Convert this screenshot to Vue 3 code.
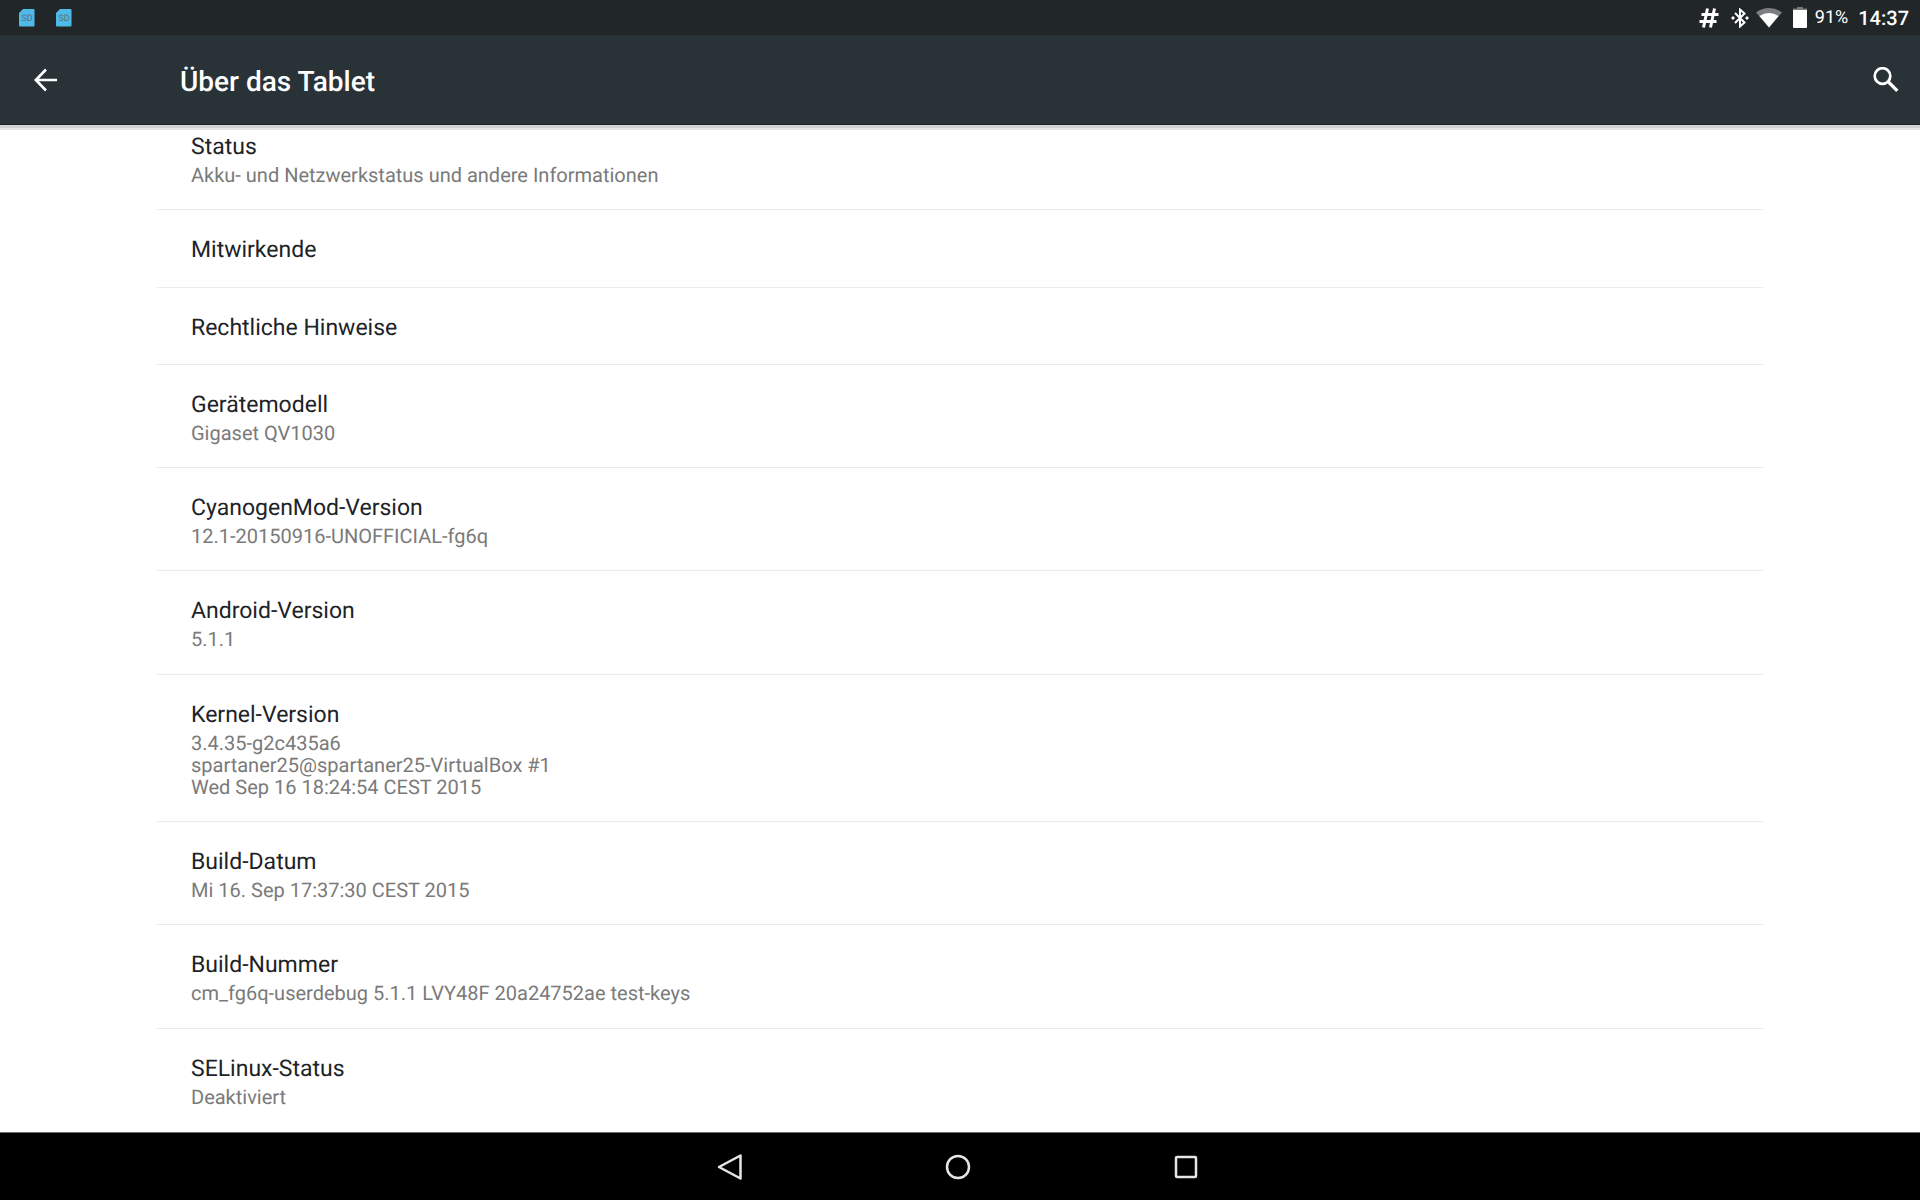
<script setup>
const sdCards = ['sd-intern', 'sd-extern'];

const entries = [
  { title: 'Status', lines: ['Akku- und Netzwerkstatus und andere Informationen'] },
  { title: 'Mitwirkende', lines: [] },
  { title: 'Rechtliche Hinweise', lines: [] },
  { title: 'Gerätemodell', lines: ['Gigaset QV1030'] },
  { title: 'CyanogenMod-Version', lines: ['12.1-20150916-UNOFFICIAL-fg6q'] },
  { title: 'Android-Version', lines: ['5.1.1'] },
  {
    title: 'Kernel-Version',
    lines: ['3.4.35-g2c435a6', 'spartaner25@spartaner25-VirtualBox #1', 'Wed Sep 16 18:24:54 CEST 2015']
  },
  { title: 'Build-Datum', lines: ['Mi 16. Sep 17:37:30 CEST 2015'] },
  { title: 'Build-Nummer', lines: ['cm_fg6q-userdebug 5.1.1 LVY48F 20a24752ae test-keys'] },
  { title: 'SELinux-Status', lines: ['Deaktiviert'] }
];
</script>

<template>
  <div class="screen">
    <div class="status-bar">
      <div class="notifications">
        <svg v-for="card in sdCards" :key="card" class="sd-icon" width="16" height="18" viewBox="0 0 16 18">
          <path d="M4 0h10.500q1 0 1 1v15.500q0 1-1 1h-13.500q-1 0-1-1V4z" fill="#4fb9e8" />
          <text x="8" y="12" text-anchor="middle" class="sd-label">SD</text>
        </svg>
      </div>
      <div class="system-icons">
        <svg width="20" height="20" viewBox="0 0 20 20" fill="none" stroke="#fff" stroke-width="3">
          <path d="M8.500 .5 4.500 19.500M15.500 .5l-4 19M2.500 6.500h17M.5 13.500h17" />
        </svg>
        <svg class="bluetooth" width="18" height="20" viewBox="0 0 18 20" fill="none" stroke="#fff" stroke-width="2">
          <path d="M4 5l9.500 9.500L9 18.500v-17l4.500 4L4 15" />
          <path d="M0 10l2-2 2 2-2 2zM14 10l2-2 2 2-2 2z" fill="#fff" stroke="none" />
        </svg>
        <svg class="wifi" width="26" height="20" viewBox="0 0 26 20">
          <path d="M13 19.500 0 4.500Q5.500 0 13 0t13 4.500z" fill="#7b7f81" />
          <path d="M13 19.500 3.500 8Q8 5 13 5t9.500 3z" fill="#fff" />
        </svg>
        <svg class="battery" width="14" height="21" viewBox="0 0 14 21">
          <path d="M4 0h6v1.500h4V4H0V1.500h4z" fill="#777b7d" />
          <path d="M0 3h14v17q0 1-1 1H1q-1 0-1-1z" fill="#fff" />
        </svg>
        <span class="percent">91%</span>
        <span class="clock">14:37</span>
      </div>
    </div>

    <header class="action-bar">
      <button class="icon-button" aria-label="Zurück">
        <svg width="24" height="24" viewBox="0 0 24 24" fill="none" stroke="#fff" stroke-width="2.600">
          <path d="M12 1.500 1.800 12 12 22.500M2 12h21" />
        </svg>
      </button>
      <h1>Über das Tablet</h1>
      <button class="icon-button" aria-label="Suchen">
        <svg width="26" height="26" viewBox="0 0 26 26" fill="none" stroke="#fff" stroke-width="2.700">
          <circle cx="9.500" cy="9" r="7.800" />
          <path d="M15 14.500l9.300 9.300" stroke-width="3.300" />
        </svg>
      </button>
    </header>

    <main class="content">
      <ul class="entries">
        <li v-for="entry in entries" :key="entry.title" class="entry">
          <h2>{{ entry.title }}</h2>
          <div v-if="entry.lines.length" class="summary">
            <p v-for="line in entry.lines" :key="line">{{ line }}</p>
          </div>
        </li>
      </ul>
    </main>

    <nav class="nav-bar">
      <button class="nav-button" aria-label="Zurück">
        <svg width="28" height="28" viewBox="0 0 28 28">
          <path d="M24.500 2.500v23L3 14z" />
        </svg>
      </button>
      <button class="nav-button" aria-label="Startbildschirm">
        <svg width="28" height="28" viewBox="0 0 28 28">
          <circle cx="14" cy="14" r="11" />
        </svg>
      </button>
      <button class="nav-button" aria-label="Übersicht">
        <svg width="28" height="28" viewBox="0 0 28 28">
          <rect x="4" y="4" width="20" height="20" rx="1" />
        </svg>
      </button>
    </nav>
  </div>
</template>

<style>
body {
  margin: 0;
  background-color: #fff;
}
</style>

<style scoped>
.screen {
  display: flex;
  flex-direction: column;
  height: 100vh;
  font-family: Roboto, sans-serif;
  text-rendering: geometricPrecision;
  background-color: #fff;
}

h1,
h2,
p,
ul {
  margin: 0;
  padding: 0;
  font-weight: 400;
}

svg {
  display: block;
  flex: none;
}

button {
  display: flex;
  align-items: center;
  justify-content: center;
  padding: 0;
  border: none;
  background: none;
  cursor: pointer;
}

/* Statusleiste */
.status-bar {
  display: flex;
  flex: none;
  align-items: center;
  justify-content: space-between;
  height: 35px;
  padding: 0 11px 0 19px;
  color: #fff;
  background-color: #212629;
}

.notifications {
  display: flex;
  gap: 21px;
}

.sd-label {
  font-size: 9px;
  fill: #5b6f78;
}

.system-icons {
  display: flex;
  align-items: center;
}

.bluetooth {
  margin-left: 12px;
}

.wifi {
  margin-left: 7px;
}

.battery {
  margin-left: 11px;
}

.percent {
  margin-left: 8px;
  font-size: 18px;
}

.clock {
  margin-left: 10px;
  font-size: 20px;
  font-weight: 500;
}

/* Titelleiste */
.action-bar {
  position: relative;
  display: flex;
  flex: none;
  align-items: center;
  box-sizing: border-box;
  height: 90px;
  padding: 0 12px 0 24px;
  border-bottom: 1px solid #1b2225;
  background-color: #283237;
  box-shadow: 0 3px 0 #d2d2d2, 0 5px 0 #e6e6e6;
}

.action-bar h1 {
  flex: 1;
  padding: 4px 0 0 112px;
  font-size: 28px;
  font-weight: 500;
  line-height: 34px;
  color: #fff;
}

.icon-button {
  width: 44px;
  height: 44px;
}

/* Liste, leicht unter die Titelleiste gescrollt */
.content {
  display: flex;
  flex: 1;
  min-height: 0;
  overflow: hidden;
}

.entries {
  display: flex;
  flex: 1;
  flex-direction: column;
  margin: -18px 157px 0;
  list-style: none;
}

.entry {
  flex: 1 0 auto;
  box-sizing: border-box;
  padding: 27px 34px 23px;
  border-bottom: 1px solid #ebebeb;
}

.entry:last-child {
  border-bottom-color: transparent;
}

.entry h2 {
  font-size: 23px;
  line-height: 26px;
  color: #1d2327;
}

.summary {
  margin-top: 4px;
  font-size: 20px;
  line-height: 22px;
  color: #7a7a7a;
}

/* Navigationsleiste */
.nav-bar {
  display: flex;
  flex: none;
  justify-content: center;
  gap: 128px;
  box-sizing: border-box;
  height: 68px;
  padding-right: 4px;
  border-top: 1px solid #6e6e6e;
  background-color: #000;
}

.nav-button {
  width: 100px;
}

.nav-button svg {
  fill: none;
  stroke: #e6e6e6;
  stroke-width: 2.500;
  stroke-linejoin: round;
}
</style>
